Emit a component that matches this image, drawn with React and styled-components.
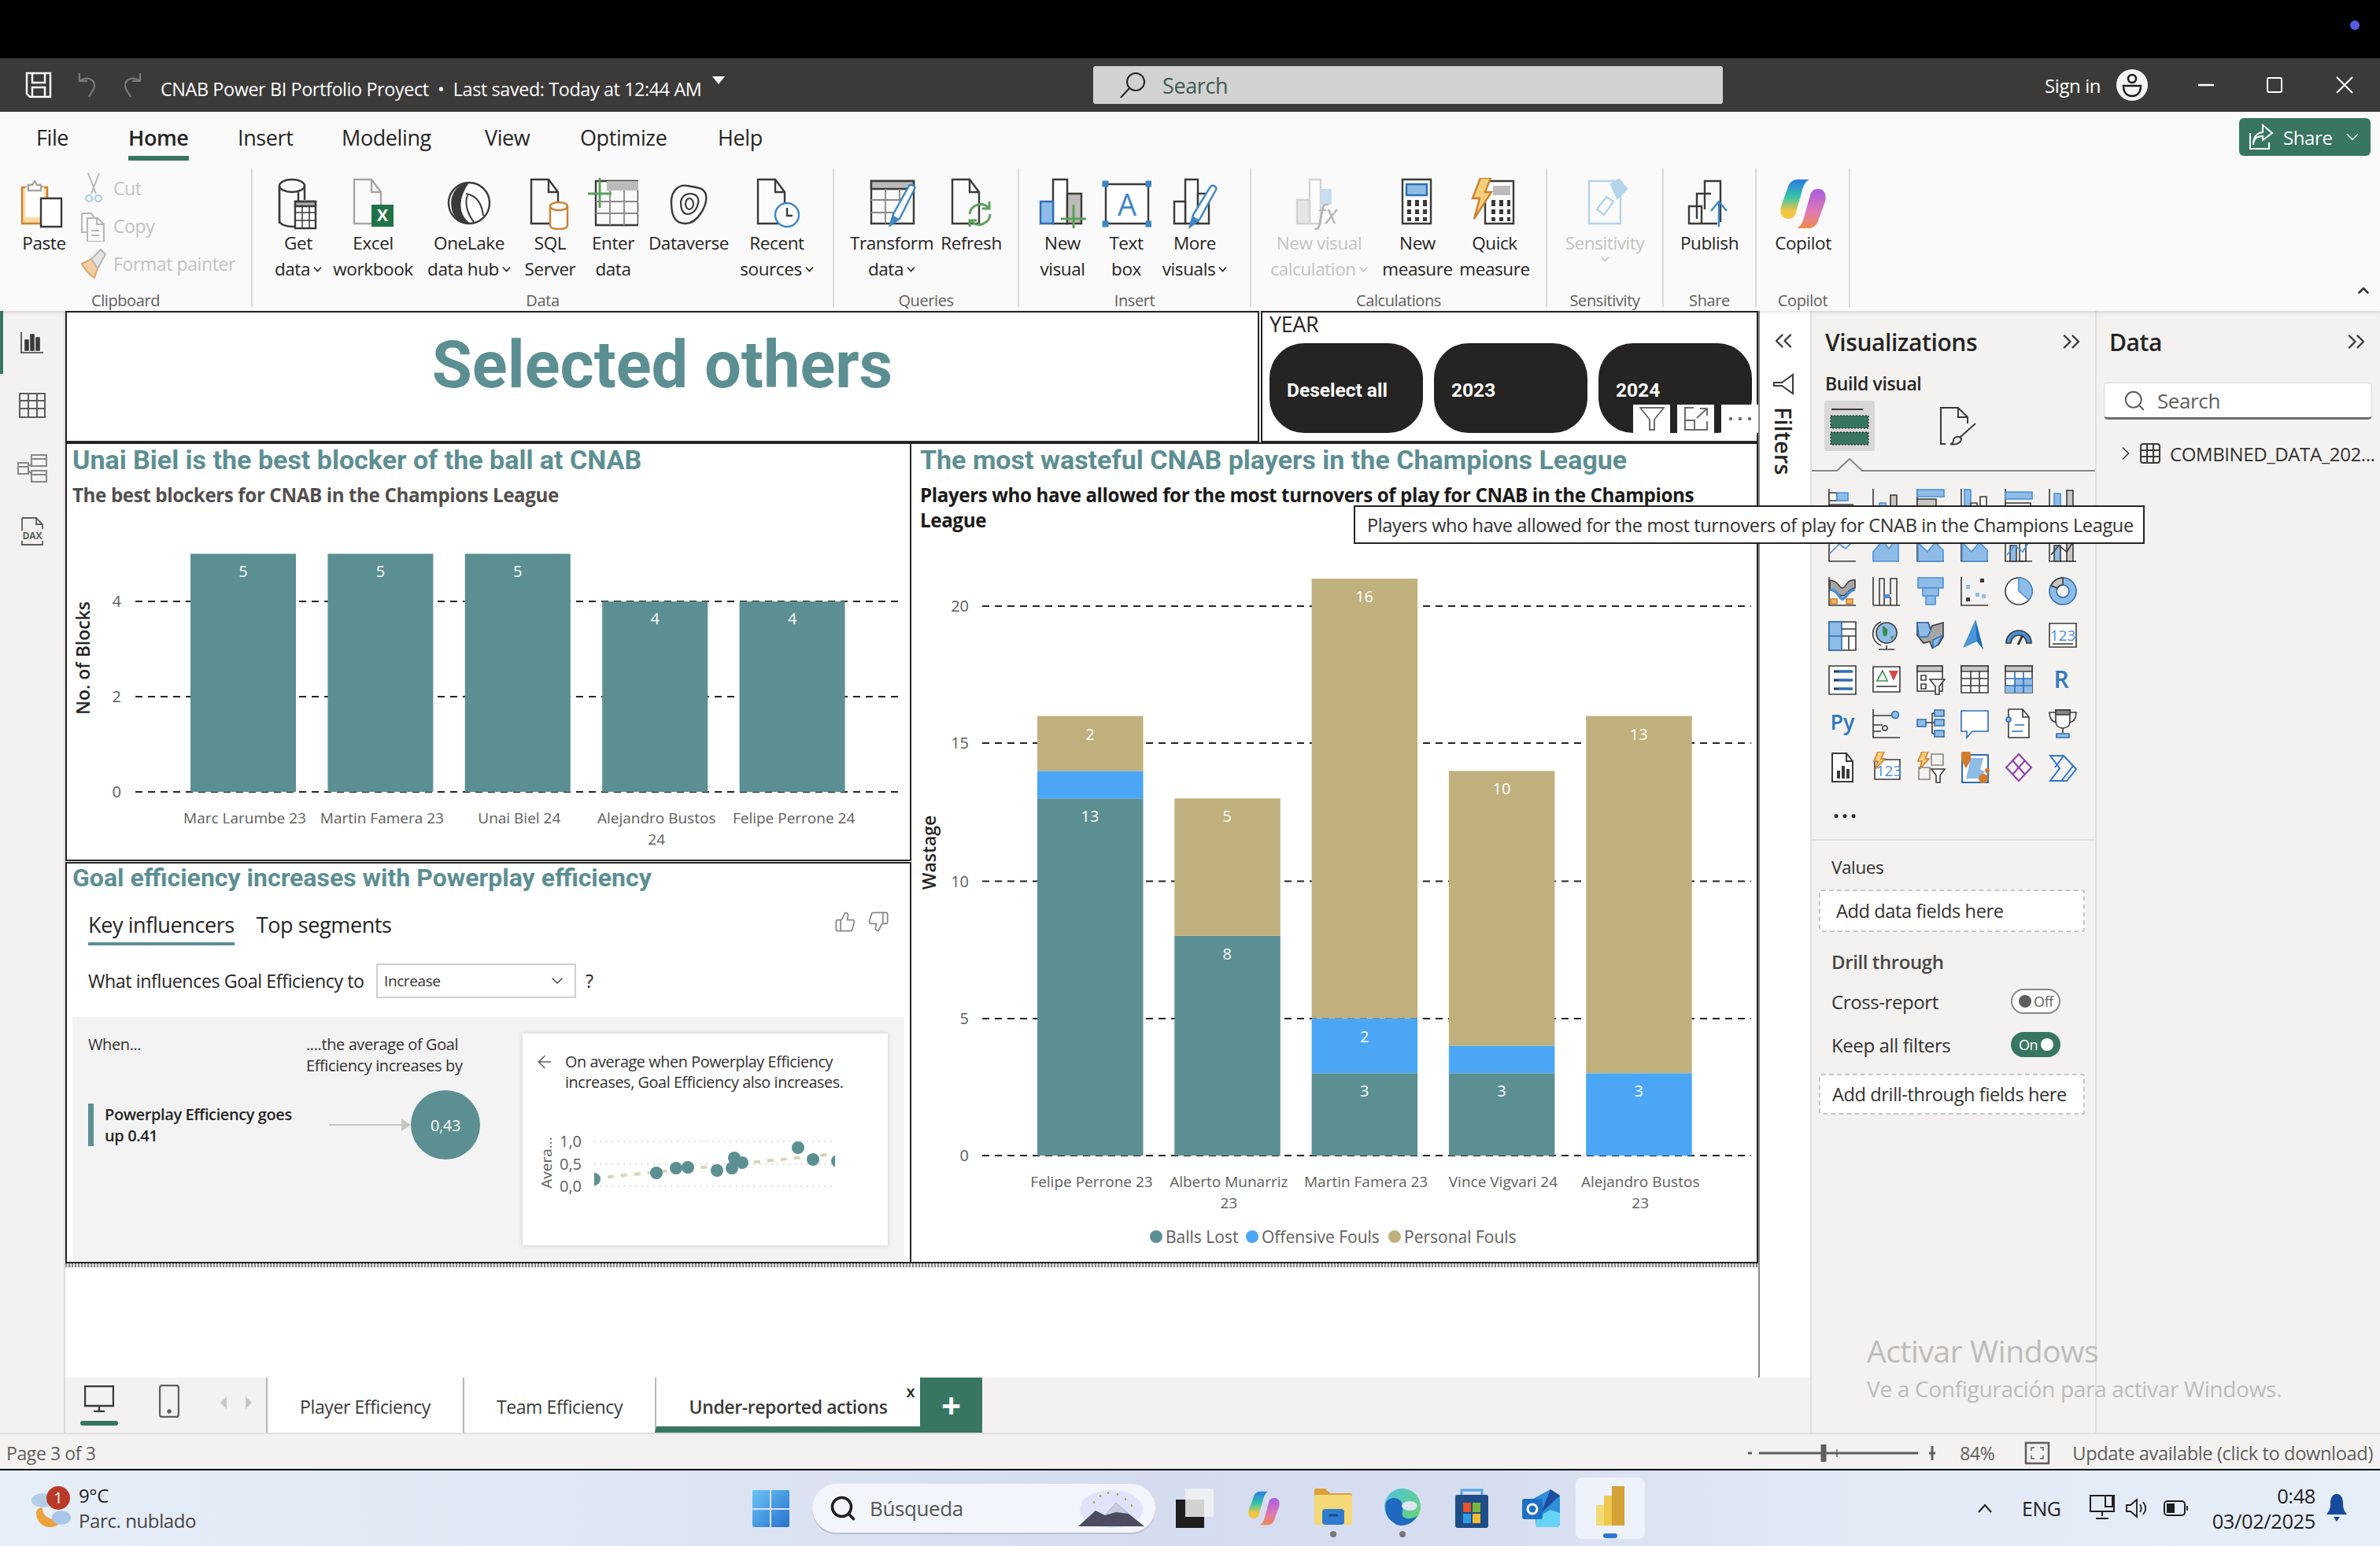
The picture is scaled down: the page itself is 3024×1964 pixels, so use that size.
import React from "react";
import styled, { createGlobalStyle } from "styled-components";
import { ChevronsLeft, ChevronsRight, ChevronDown, ChevronRight, ChevronUp, ThumbsUp, ThumbsDown, ArrowLeft, Search as SearchGlyph } from "lucide-react";

const UI = `"Open Sans", "Noto Sans", sans-serif`;
const DIN = `Roboto, "Liberation Sans", sans-serif`;
const TEAL = "#5c8f92";
const GREEN = "#387662";
const TAN = "#bfb07e";
const SKY = "#4ba6f5";
const INK = "#3b3a39";
const BLUE = "#4a8fd8";
const LBLUE = "#8fbce6";
const GREY = "#a8a6a4";

const GlobalStyle = createGlobalStyle`
    html, body {
        margin: 0;
        padding: 0;
        background: #fff;
    }
    body {
        font-family: ${UI};
        letter-spacing: -0.025em;
        color: #252423;
    }
    * { box-sizing: border-box; }
`;

const Page = styled.div`
    position: relative;
    width: 3024px;
    height: 1964px;
    overflow: hidden;
    display: flex;
    flex-direction: column;
`;

/* --- window chrome --- */
const TopBlack = styled.div`
    height: 74px;
    background: #000;
    display: flex;
    justify-content: flex-end;
    padding: 26px 26px 0 0;
`;
const Dot = styled.div`
    width: 12px;
    height: 12px;
    border-radius: 50%;
    background: #5b5be0;
`;
const TitleBar = styled.div`
    height: 68px;
    background: ${INK};
    display: grid;
    grid-template-columns: 1389px 800px 1fr;
    align-items: center;
    color: #fff;
`;
const TitleLeft = styled.div`
    display: flex;
    align-items: center;
    padding-left: 32px;
`;
const QuickIcon = styled.svg`
    display: block;
    margin-right: ${(p) => p.$mr}px;
`;
const DocTitle = styled.span`
    font-size: 23.4px;
    padding-top: 9px;
    white-space: nowrap;
`;
const TitleCaret = styled.svg`
    margin: 0 0 10px 14px;
`;
const SearchBar = styled.div`
    height: 48px;
    background: #d2d2d0;
    border-radius: 3px;
    display: flex;
    align-items: center;
    padding-left: 32px;
    gap: 20px;
    font-size: 27px;
    color: #3d5a54;
`;
const TitleRight = styled.div`
    display: flex;
    align-items: center;
    padding-left: 409px;
    font-size: 24px;
`;
const Avatar = styled.svg`
    margin: 0 64px 0 20px;
    display: block;
`;
const WinBtn = styled.svg`
    display: block;
    margin-right: ${(p) => p.$mr || 0}px;
`;

/* --- ribbon --- */
const Ribbon = styled.div`
    height: 253px;
    background: #fafafa;
    display: flex;
    flex-direction: column;
    box-shadow: 0 2px 4px rgba(0, 0, 0, 0.12);
    position: relative;
    z-index: 2;
`;
const TabRow = styled.div`
    height: 72px;
    display: flex;
    padding-left: 46px;
`;
const RibbonTab = styled.div`
    width: ${(p) => p.$w}px;
    padding-top: 13px;
    font-size: 27px;
    line-height: 40px;
    color: #252423;
`;
const RibbonTabLabel = styled.span`
    display: inline-block;
    height: 49px;
    font-weight: ${(p) => (p.$active ? 600 : 400)};
    border-bottom: ${(p) => (p.$active ? `6px solid ${GREEN}` : "none")};
`;
const ShareBtn = styled.div`
    margin: 8px 12px 0 auto;
    width: 167px;
    height: 48px;
    background: ${GREEN};
    border-radius: 6px;
    color: #fff;
    font-size: 24px;
    display: flex;
    align-items: center;
    padding-left: 12px;
    gap: 12px;
`;
const CommandRow = styled.div`
    flex: 1;
    display: flex;
    position: relative;
`;
const Group = styled.div`
    width: ${(p) => p.$w}px;
    height: 176px;
    border-right: 2px solid #dcdad8;
    display: flex;
    flex-direction: column;
`;
const GroupBody = styled.div`
    height: 156px;
    flex: none;
    display: flex;
    padding-left: ${(p) => p.$pl || 0}px;
`;
const GroupLabel = styled.div`
    height: 24px;
    line-height: 24px;
    flex: none;
    font-size: 20px;
    text-align: center;
    color: #605e5c;
`;
const Cmd = styled.div`
    width: ${(p) => p.$w}px;
    padding-top: 12px;
    display: flex;
    flex-direction: column;
    align-items: center;
    color: ${(p) => (p.$off ? "#c4c2c0" : "#252423")};
`;
const CmdIcon = styled.svg`
    display: block;
    flex: none;
`;
const CmdLine = styled.div`
    font-size: 22.5px;
    line-height: 33px;
    white-space: nowrap;
    display: flex;
    align-items: center;
    gap: 4px;
`;
const SmallCol = styled.div`
    padding-top: 1px;
`;
const SmallRow = styled.div`
    height: 48px;
    display: flex;
    align-items: center;
    font-size: 23px;
    color: #c4c2c0;
    gap: 8px;
    white-space: nowrap;
`;
const Collapse = styled.div`
    position: absolute;
    right: 10px;
    bottom: 10px;
    color: ${INK};
`;

/* --- main area --- */
const Main = styled.div`
    height: 1427px;
    flex: none;
    display: flex;
    border-bottom: 2px solid #e1dfdd;
`;
const Rail = styled.div`
    width: 81px;
    background: #f3f2f1;
    flex: none;
`;
const RailBtn = styled.div`
    height: 80px;
    display: flex;
    align-items: center;
    justify-content: center;
    border-left: 4px solid ${(p) => (p.$active ? GREEN : "transparent")};
    padding-right: 4px;
`;
const Middle = styled.div`
    width: 2219px;
    display: flex;
    flex-direction: column;
`;
const CanvasRow = styled.div`
    height: 1355px;
    flex: none;
    display: flex;
`;
const Canvas = styled.div`
    width: 2155px;
    background: #fff;
    border-right: 2px solid #8a8886;
    border-left: 2px solid #e1dfdd;
`;
const VisualRow = styled.div`
    display: flex;
    height: ${(p) => p.$h}px;
`;
const BannerCard = styled.div`
    width: 1517px;
    border: 2px solid #252423;
    display: flex;
    align-items: center;
    justify-content: center;
    padding-bottom: 30px;
`;
const BannerTitle = styled.div`
    font-family: ${DIN};
    font-weight: 700;
    font-size: 83px;
    color: ${TEAL};
    letter-spacing: 0;
`;
const SlicerCard = styled.div`
    position: relative;
    margin-left: 2px;
    flex: 1;
    border: 2px solid #252423;
    padding-left: 9px;
`;
const SlicerTitle = styled.div`
    font-size: 27px;
    line-height: 30px;
`;
const SlicerRow = styled.div`
    margin-top: 9px;
    display: flex;
    gap: 14px;
`;
const SlicerBtn = styled.div`
    width: 195px;
    height: 114px;
    border-radius: 44px;
    background: #252423;
    color: #fff;
    font-family: ${DIN};
    font-weight: 700;
    font-size: 24.5px;
    letter-spacing: 0;
    display: flex;
    align-items: center;
    padding: 4px 0 0 22px;
`;
const HoverTools = styled.div`
    position: absolute;
    right: -2px;
    bottom: 10px;
    display: flex;
    gap: 9px;
`;
const HoverTool = styled.div`
    width: 47px;
    height: 36px;
    background: #fff;
    display: flex;
    align-items: center;
    justify-content: center;
    color: #6e6c6a;
`;
const LeftColumn = styled.div`
    width: 1075px;
    flex: none;
    display: flex;
    flex-direction: column;
    gap: 1px;
`;
const Card = styled.div`
    height: ${(p) => p.$h}px;
    border: 2px solid #252423;
    border-left-width: ${(p) => (p.$noLeft ? 0 : 2)}px;
    display: flex;
    flex-direction: column;
    flex: ${(p) => (p.$grow ? 1 : "none")};
    min-width: 0;
`;
const CardTitle = styled.div`
    font-family: ${DIN};
    font-weight: 700;
    font-size: ${(p) => p.$size || 34}px;
    line-height: ${(p) => p.$lh || 40}px;
    color: ${TEAL};
    padding-left: ${(p) => p.$pl}px;
    letter-spacing: 0;
    white-space: nowrap;
`;
const CardSub = styled.div`
    margin: ${(p) => p.$mt}px 0 ${(p) => p.$mb || 0}px;
    padding: 0 60px 0 ${(p) => p.$pl}px;
    font-size: 24.2px;
    line-height: 32px;
    font-weight: 700;
    color: ${(p) => p.$color};
`;
const ChartSvg = styled.svg`
    display: block;
    overflow: visible;
    flex: none;
`;
const MiniChart = styled(ChartSvg)`
    margin-top: 12px;
`;
const Tick = styled.text`
    font-family: ${UI};
    font-size: ${(p) => p.$size || 19}px;
    fill: #605e5c;
    letter-spacing: 0;
`;
const AxisName = styled.text`
    font-family: ${UI};
    font-size: 23px;
    font-weight: 600;
    fill: #252423;
    letter-spacing: 0;
`;
const BarValue = styled.text`
    font-family: ${UI};
    font-size: 20px;
    fill: #fff;
    letter-spacing: 0;
`;
const LegendText = styled.text`
    font-family: ${UI};
    font-size: 21px;
    fill: #605e5c;
    letter-spacing: 0;
`;
const DottedBand = styled.div`
    height: 5px;
    background: repeating-linear-gradient(90deg, #8a8886 0 2px, #e8e8e8 2px 4px);
`;

/* key influencers */
const KiTabs = styled.div`
    margin-top: 24px;
    padding: 0 26px 0 27px;
    display: flex;
    gap: 28px;
`;
const KiTab = styled.div`
    font-size: 27px;
    line-height: 36px;
    height: 44px;
    border-bottom: ${(p) => (p.$active ? `4px solid ${TEAL}` : "none")};
`;
const Thumbs = styled.div`
    margin-left: auto;
    display: flex;
    gap: 14px;
    color: #8a8886;
`;
const PromptRow = styled.div`
    margin-top: 23px;
    padding-left: 27px;
    height: 44px;
    display: flex;
    align-items: center;
    font-size: 23.2px;
`;
const PromptText = styled.div`
    width: 366px;
    white-space: nowrap;
`;
const Select = styled.div`
    width: 254px;
    height: 44px;
    border: 2px solid #d2d0ce;
    display: flex;
    align-items: center;
    justify-content: space-between;
    padding: 0 10px 0 8px;
    font-size: 19px;
    color: #323130;
    margin-right: 12px;
`;
const InsightPanel = styled.div`
    margin: 24px 7px 0;
    flex: 1;
    background: #f3f3f3;
    display: flex;
    padding: 21px 0 0 20px;
`;
const InsightLeft = styled.div`
    width: 552px;
    flex: none;
`;
const InsightHead = styled.div`
    display: flex;
    font-size: 20px;
    line-height: 27px;
    color: #323130;
`;
const WhenCell = styled.div`
    width: 277px;
`;
const InfluenceRow = styled.div`
    margin-top: 18px;
    height: 88px;
    display: flex;
    align-items: center;
`;
const InfluenceLabel = styled.div`
    width: 306px;
    height: 54px;
    border-left: 7px solid ${TEAL};
    padding-left: 14px;
    font-size: 20px;
    line-height: 27px;
    font-weight: 600;
    color: #252423;
    white-space: nowrap;
`;
const InfluenceArrow = styled.svg`
    flex: none;
`;
const InfluenceBubble = styled.div`
    width: 88px;
    height: 88px;
    flex: none;
    border-radius: 50%;
    background: ${TEAL};
    color: #fff;
    font-size: 20px;
    display: flex;
    align-items: center;
    justify-content: center;
`;
const DetailCard = styled.div`
    width: 464px;
    height: 269px;
    background: #fff;
    box-shadow: 0 0 6px rgba(0, 0, 0, 0.18);
    padding-top: 23px;
`;
const DetailHead = styled.div`
    display: flex;
    padding-left: 15px;
    font-size: 19.8px;
    line-height: 26px;
    color: #323130;
    white-space: nowrap;
`;
const DetailBack = styled.div`
    width: 39px;
    flex: none;
    color: #605e5c;
`;

/* filters + panes */
const FiltersPane = styled.div`
    width: 64px;
    background: #fff;
    display: flex;
    flex-direction: column;
    align-items: center;
    padding: 20px 4px 0 0;
    color: ${INK};
`;
const FilterFunnel = styled.svg`
    margin-top: 23px;
`;
const FiltersLabel = styled.div`
    writing-mode: vertical-rl;
    font-size: 29px;
    font-weight: 600;
    margin-top: 15px;
    color: #252423;
    letter-spacing: 0;
`;
const TabBar = styled.div`
    height: 70px;
    flex: none;
    background: #f3f2f1;
    display: flex;
    border-left: 2px solid #dcdad8;
`;
const DeviceBtn = styled.div`
    width: ${(p) => p.$w}px;
    display: flex;
    flex-direction: column;
    align-items: center;
    padding-top: ${(p) => p.$pt}px;
`;
const DevicePill = styled.div`
    width: 48px;
    height: 6px;
    border-radius: 3px;
    background: ${GREEN};
    margin-top: 11px;
`;
const PageArrows = styled.div`
    width: 77px;
    display: flex;
    justify-content: center;
    align-items: center;
    gap: 24px;
    padding-bottom: 6px;
`;
const PageTab = styled.div`
    position: relative;
    width: ${(p) => p.$w}px;
    background: #fff;
    border-left: 2px solid #b9b7b5;
    border-bottom: ${(p) => (p.$active ? `8px solid ${GREEN}` : "none")};
    padding-top: ${(p) => (p.$active ? 12 : 4)}px;
    display: flex;
    align-items: center;
    justify-content: center;
    font-size: 23px;
    font-weight: ${(p) => (p.$active ? 600 : 400)};
    color: #3b3a39;
    white-space: nowrap;
`;
const TabClose = styled.span`
    position: absolute;
    right: 7px;
    top: 4px;
    font-size: 20px;
    color: #252423;
`;
const AddPage = styled.div`
    width: 79px;
    background: ${GREEN};
    display: flex;
    align-items: center;
    justify-content: center;
    color: #fff;
    font-size: 44px;
    font-weight: 700;
    line-height: 1;
`;
const Pane = styled.div`
    width: ${(p) => p.$w}px;
    background: #f3f2f1;
    border-left: 2px solid #e1dfdd;
    flex: none;
`;
const PaneHead = styled.div`
    height: 78px;
    display: flex;
    align-items: center;
    justify-content: space-between;
    padding: 0 ${(p) => p.$pr}px 0 ${(p) => p.$pl}px;
    font-size: 30px;
    font-weight: 600;
    color: #252423;
`;
const BuildLabel = styled.div`
    padding-left: 17px;
    font-size: 23px;
    font-weight: 600;
    line-height: 30px;
    margin-top: -1px;
`;
const BuildTabs = styled.div`
    margin-top: 7px;
    padding-left: 16px;
    display: flex;
    align-items: center;
`;
const BuildTab = styled.div`
    width: 64px;
    height: 64px;
    border-radius: 3px;
    background: ${(p) => (p.$active ? "#d9d7d6" : "transparent")};
    margin-right: ${(p) => p.$mr || 0}px;
    display: flex;
    align-items: center;
    justify-content: center;
`;
const Notch = styled.svg`
    display: block;
    margin-top: 9px;
`;
const VizGrid = styled.div`
    margin-top: 11px;
    padding-left: 11px;
    display: grid;
    grid-template-columns: repeat(6, 56px);
    grid-auto-rows: 56px;
`;
const VizCell = styled.div`
    display: flex;
    align-items: center;
    justify-content: center;
`;
const VizMore = styled.div`
    height: 50px;
    padding-left: 27px;
    font-size: 28px;
    font-weight: 700;
    letter-spacing: 3px;
    line-height: 50px;
`;
const PaneSection = styled.div`
    margin-top: 13px;
    border-top: 2px solid #e1dfdd;
    padding-top: 19px;
`;
const FieldLabel = styled.div`
    margin-top: ${(p) => p.$mt || 0}px;
    padding-left: 25px;
    font-size: ${(p) => (p.$bold ? 24 : 22.5)}px;
    line-height: 30px;
    font-weight: ${(p) => (p.$bold ? 600 : 400)};
    color: ${(p) => (p.$bold ? "#484644" : "#323130")};
`;
const DropBox = styled.div`
    margin: ${(p) => p.$mt}px 13px 0 9px;
    height: ${(p) => p.$h}px;
    background: #fff;
    border: 2px dashed #c8c6c4;
    border-radius: 3px;
    display: flex;
    align-items: center;
    padding-left: ${(p) => p.$pl}px;
    font-size: 23.6px;
    color: #323130;
    white-space: nowrap;
`;
const ToggleRow = styled.div`
    margin-top: ${(p) => p.$mt}px;
    width: 316px;
    height: 32px;
    padding-left: 25px;
    display: flex;
    align-items: center;
    justify-content: space-between;
    font-size: 24px;
    color: #323130;
`;
const Toggle = styled.div`
    width: 63px;
    height: 32px;
    border-radius: 16px;
    border: 2px solid ${(p) => (p.$on ? GREEN : "#8a8886")};
    background: ${(p) => (p.$on ? GREEN : "#fff")};
    display: flex;
    flex-direction: ${(p) => (p.$on ? "row" : "row-reverse")};
    align-items: center;
    justify-content: space-between;
    padding: 0 7px 0 8px;
    font-size: 18px;
    color: ${(p) => (p.$on ? "#fff" : "#605e5c")};
`;
const ToggleKnob = styled.span`
    width: 16px;
    height: 16px;
    border-radius: 50%;
    background: ${(p) => (p.$on ? "#fff" : "#605e5c")};
`;
const DataSearch = styled.div`
    margin: 13px 10px 0 9px;
    height: 47px;
    background: #fff;
    border-radius: 5px;
    border: 1px solid #d8d6d4;
    border-bottom: 3px solid #6e6c6a;
    display: flex;
    align-items: center;
    padding-left: 23px;
    gap: 14px;
    font-size: 26px;
    color: #605e5c;
`;
const TreeRow = styled.div`
    margin-top: 23px;
    height: 40px;
    padding-left: 23px;
    display: flex;
    align-items: center;
    font-size: 24px;
    color: #323130;
    white-space: nowrap;
`;
const TreeTable = styled.svg`
    margin: 0 12px 0 4px;
`;

/* status + taskbar */
const StatusBar = styled.div`
    height: 44px;
    flex: none;
    background: #f3f2f1;
    display: flex;
    align-items: center;
    padding: 3px 9px 0 8px;
    font-size: 23px;
    color: #605e5c;
`;
const StatusRight = styled.div`
    margin-left: auto;
    display: flex;
    align-items: center;
`;
const StatusPct = styled.span`
    margin-left: 25px;
`;
const StatusFit = styled.svg`
    display: block;
    margin: 0 28px 0 38px;
`;
const UpdateText = styled.span`
    font-size: 23.7px;
`;
const Taskbar = styled.div`
    flex: 1;
    border-top: 2px solid #000;
    background: linear-gradient(90deg, #e6eef8 0%, #dfe7f4 25%, #d5dcf0 48%, #d6ddf0 62%, #e2eaf6 78%, #e6eef8 100%);
    display: flex;
    align-items: center;
`;
const Weather = styled.div`
    width: 956px;
    padding-left: 38px;
    display: flex;
    align-items: center;
`;
const WeatherText = styled.div`
    font-size: 24px;
    line-height: 32px;
    color: #252423;
`;
const WeatherSub = styled.div`
    color: #444;
`;
const TaskSearch = styled.div`
    margin-left: 29px;
    width: 436px;
    height: 62px;
    border-radius: 31px;
    background: #f2f5fb;
    box-shadow: 0 2px 1px #b8bdd2;
    display: flex;
    align-items: center;
    padding-left: 21px;
    gap: 16px;
    font-size: 26px;
    color: #555;
`;
const TaskSearchArt = styled.svg`
    display: block;
    margin-left: auto;
    margin-right: 12px;
`;
const TaskApps = styled.div`
    margin-left: 6px;
    display: flex;
`;
const TaskApp = styled.div`
    position: relative;
    width: 88px;
    height: 78px;
    display: flex;
    align-items: center;
    justify-content: center;
    border-radius: 8px;
    background: ${(p) => (p.$active ? "#eef2fb" : "transparent")};
`;
const TaskAppIcon = styled.svg`
    display: block;
    margin-top: ${(p) => p.$mt || 0}px;
`;
const TaskDot = styled.span`
    position: absolute;
    bottom: ${(p) => (p.$active ? 1 : 2)}px;
    left: 50%;
    transform: translateX(-50%);
    width: ${(p) => (p.$active ? 18 : 8)}px;
    height: ${(p) => (p.$active ? 6 : 8)}px;
    border-radius: 4px;
    background: ${(p) => (p.$active ? "#2f76cf" : "#777")};
`;
const Tray = styled.div`
    margin-left: auto;
    display: flex;
    align-items: center;
    padding-right: 42px;
    font-size: 25px;
    color: #1f1f1f;
`;
const TrayItem = styled.div`
    margin-right: ${(p) => p.$mr}px;
    display: flex;
    align-items: center;
`;
const Clock = styled.div`
    text-align: right;
    font-size: 25.5px;
    line-height: 32px;
    margin-right: 14px;
`;

/* overlays */
const Tooltip = styled.div`
    position: absolute;
    left: 1720px;
    top: 642px;
    width: 1005px;
    height: 49px;
    background: #fff;
    border: 2px solid #252423;
    display: flex;
    align-items: center;
    padding-left: 15px;
    font-size: 23.6px;
    color: #323130;
    white-space: nowrap;
    z-index: 5;
`;
const Watermark = styled.div`
    position: absolute;
    left: 2372px;
    top: 1692px;
    color: #bdbcba;
    font-size: 28.2px;
    line-height: 48px;
    z-index: 5;
    white-space: nowrap;
`;
const WatermarkBig = styled.div`
    font-size: 39px;
`;
const IconText = styled.text`
    font-family: ${UI};
    letter-spacing: 0;
`;

/* --- ribbon icon drawings --- */
const RI = ({ children, off }) => (
    <CmdIcon width="64" height="66" viewBox="0 0 64 66" fill="none" stroke={INK} strokeWidth="2.4" opacity={off ? 0.45 : 1}>
        {children}
    </CmdIcon>
);
const DocShape = () => <path d="M8 2h22l12 16v40H8zM30 2v16h12" fill="#fafafa" />;

const copilotLeft = "M12 14c2-8 7-12 13-12h15c-6 3-8 9-10 17l-7 25c-1 5-5 8-10 8-9 0-11-9-9-16z";
const copilotRight = "M52 52c-2 8-7 12-13 12H24c6-3 8-9 10-17l7-25c1-5 5-8 10-8 9 0 11 9 9 16z";

const ribbonIcons = {
    paste: (
        <RI>
            <path d="M4 12h32v46H4z" fill="#f7dc9e" stroke="#cf7f2e" />
            <path d="M8 12h24v38H8z" fill="#fff" stroke="none" />
            <path d="M12 16V9h5l3-5 3 5h5v7z" fill="#fff" stroke={GREY} />
            <path d="M28 26h26v36H28z" fill="#fff" />
        </RI>
    ),
    getData: (
        <RI>
            <path d="M8 10v44c0 5 8 8 20 8h4V10" fill="#fafafa" />
            <ellipse cx="24" cy="10" rx="16" ry="8" fill="#fafafa" />
            <path d="M8 10v48M40 10v18" />
            <path d="M28 30h26v34H28z" fill="#fff" />
            <path d="M28 30h26v6H28z" fill={GREY} />
            <path d="M28 44h26M28 54h26M37 36v28M46 36v28" strokeWidth="1.5" />
        </RI>
    ),
    excel: (
        <RI>
            <path d="M8 2h22l12 16v40H8zM30 2v16h12" fill="#fafafa" stroke={GREY} />
            <rect x="30" y="34" width="28" height="28" fill="#217346" stroke="none" />
            <IconText x="44" y="55" textAnchor="middle" fontSize="21" fontWeight="700" fill="#fff" stroke="none">X</IconText>
        </RI>
    ),
    oneLake: (
        <RI>
            <circle cx="32" cy="32" r="26" fill="#fff" stroke={INK} />
            <path d="M32 6C16 8 6 22 10 40c3 14 16 20 24 18-12-8-20-26-2-52z" fill={INK} stroke="none" />
            <path d="M28 20c12 2 20 10 22 28M30 22c-4 10 0 24 8 34" strokeWidth="2" />
        </RI>
    ),
    sql: (
        <RI>
            <DocShape />
            <path d="M32 36v24c0 3 4 5 11 5s11-2 11-5V36" fill="#fff" stroke="#cf7f2e" />
            <ellipse cx="43" cy="36" rx="11" ry="5" fill="#fff" stroke="#cf7f2e" />
        </RI>
    ),
    enter: (
        <RI>
            <path d="M10 4h54v56H10z" fill="#fafafa" />
            <path d="M24 4h40v12H24z" fill="#bdbbb9" stroke="none" />
            <path d="M10 30h54M10 45h54M28 16v44M46 16v44" strokeWidth="1.8" stroke="#8a8886" />
            <path d="M15 0v38M0 20h30" stroke="#5aa05a" strokeWidth="3" />
        </RI>
    ),
    dataverse: (
        <RI>
            <path d="M10 30c0-14 10-22 20-20 12 2 22 2 24 12 2 12-10 36-26 36S10 44 10 30z" strokeWidth="2.4" />
            <path d="M22 32c0-8 6-12 12-12s12 4 10 12c-2 10-8 14-14 14s-8-8-8-14z" strokeWidth="2.2" />
            <ellipse cx="33" cy="33" rx="5" ry="7" strokeWidth="2" />
        </RI>
    ),
    recent: (
        <RI>
            <DocShape />
            <circle cx="45" cy="47" r="15" fill="#fff" stroke="#3d86c8" />
            <path d="M45 38v10h7" stroke={INK} />
        </RI>
    ),
    transform: (
        <RI>
            <path d="M6 4h54v54H6z" fill="#fafafa" />
            <path d="M6 4h54v10H6z" fill="#bdbbb9" />
            <path d="M6 28h42M6 44h30M24 14v44M42 14v14" stroke="#8a8886" strokeWidth="1.8" />
            <path d="M30 60l4-14 20-36c2-3 9 0 7 4L42 52z" fill="#fff" stroke="#3d86c8" />
            <path d="M30 62l3-15 8 5z" fill="#3d86c8" stroke="none" />
        </RI>
    ),
    refresh: (
        <RI>
            <DocShape />
            <path d="M30 46a14 14 0 0 1 24-8M56 46a14 14 0 0 1-24 9" stroke="#5aa05a" strokeWidth="3" />
            <path d="M55 30v9h-9M30 62v-8h9" stroke="#5aa05a" strokeWidth="3" />
        </RI>
    ),
    newVisual: (
        <RI>
            <path d="M20 2h18v56H20z" fill="#fff" />
            <path d="M38 20h18v38H38z" fill="#bdbbb9" />
            <path d="M4 30h16v28H4z" fill={LBLUE} stroke="#2f6db5" />
            <path d="M46 34v30M30 52h32" stroke="#5aa05a" strokeWidth="3" />
        </RI>
    ),
    textBox: (
        <RI>
            <path d="M6 8h54v50H6z" fill="#fff" />
            <path d="M2 4h7v7H2zM57 4h7v7h-7zM2 55h7v7H2zM57 55h7v7h-7z" fill="#3d86c8" stroke="#3d86c8" strokeWidth="1" />
            <IconText x="33" y="48" textAnchor="middle" fontSize="38" fill="#3d86c8" stroke="none">A</IconText>
        </RI>
    ),
    moreVisuals: (
        <RI>
            <path d="M20 2h16v56H20z" fill="#fff" />
            <path d="M36 20h14v38H36zM6 30h14v28H6z" fill="#fafafa" />
            <path d="M26 62l4-15 22-36c2-3 9 0 7 4L38 53z" fill="#fff" stroke="#3d86c8" />
            <path d="M26 63l3-15 8 5z" fill="#3d86c8" stroke="none" />
        </RI>
    ),
    calc: (
        <RI off>
            <path d="M20 2h14v56H20z" stroke={GREY} fill="#fff" />
            <path d="M34 14h14v20H34z" fill={LBLUE} stroke="none" />
            <path d="M4 28h16v30H4z" fill="#d2d0ce" stroke={GREY} />
            <IconText x="30" y="58" fontSize="32" fontStyle="italic" fill="#605e5c" stroke="none">fx</IconText>
        </RI>
    ),
    measure: (
        <RI>
            <path d="M13 2h36v56H13z" fill="#fff" />
            <path d="M18 8h26v14H18z" fill={LBLUE} stroke="#2f6db5" />
            <path d="M19 28h5v8h-5zM29 28h5v8h-5zM39 28h5v8h-5zM19 40h5v6h-5zM29 40h5v6h-5zM39 40h5v6h-5zM19 50h5v5h-5zM29 50h5v5h-5zM39 50h5v5h-5z" fill={INK} stroke="none" />
        </RI>
    ),
    quick: (
        <RI>
            <path d="M20 4h36v54H20z" fill="#fff" />
            <path d="M30 10h22v12H30z" fill="#bdbbb9" stroke="none" />
            <path d="M28 28h5v8h-5zM38 28h5v8h-5zM48 28h4v8h-4zM28 40h5v6h-5zM38 40h5v6h-5zM48 40h4v6h-4zM28 50h5v5h-5zM38 50h5v5h-5zM48 50h4v5h-4z" fill={INK} stroke="none" />
            <path d="M14 0h13l-7 18h8L6 52l7-26H4z" fill="#f7cf7a" stroke="#cf7f2e" />
        </RI>
    ),
    sensitivity: (
        <RI>
            <path d="M12 4h40v54H12z" stroke="#b4d4ec" fill="#fafafa" />
            <path d="M22 40l12-16 9 6-12 17z" stroke="#b4d4ec" />
            <path d="M40 8l10-6 10 12-12 12z" fill="#b4d4ec" stroke="#b4d4ec" />
        </RI>
    ),
    publish: (
        <RI>
            <path d="M26 40V4h20v52" />
            <path d="M16 52V20h18" />
            <path d="M6 58V36h16v22zM6 58h36" />
            <path d="M44 62V32M34 42l10-12 10 12" stroke="#3d86c8" />
        </RI>
    ),
    copilot: (
        <CmdIcon width="64" height="66" viewBox="0 0 64 66">
            <defs>
                <linearGradient id="cpA" x1="0" y1="0" x2="0" y2="1">
                    <stop offset="0" stopColor="#2b78e4" />
                    <stop offset="0.45" stopColor="#36c6a8" />
                    <stop offset="0.8" stopColor="#f4c542" />
                </linearGradient>
                <linearGradient id="cpB" x1="0" y1="0" x2="0" y2="1">
                    <stop offset="0" stopColor="#a85be0" />
                    <stop offset="0.6" stopColor="#e07ab0" />
                    <stop offset="1" stopColor="#f08a4a" />
                </linearGradient>
            </defs>
            <path d={copilotLeft} fill="url(#cpA)" />
            <path d={copilotRight} fill="url(#cpB)" />
        </CmdIcon>
    ),
};

const SmallCut = () => (
    <CmdIcon width="34" height="40" viewBox="0 0 34 40" fill="none" stroke="#b8b6b4" strokeWidth="2">
        <path d="M10 1l10 26M24 1L14 27" />
        <circle cx="11" cy="33" r="4" stroke="#a9cbe6" />
        <circle cx="23" cy="33" r="4" stroke="#a9cbe6" />
    </CmdIcon>
);
const SmallCopy = () => (
    <CmdIcon width="34" height="40" viewBox="0 0 34 40" fill="none" stroke="#b8b6b4" strokeWidth="2">
        <path d="M2 4h12l4 6M2 4v24h6" />
        <path d="M9 10h13l8 8v22H9zM21 10v8h9M14 26h10M14 32h10" fill="#fafafa" />
    </CmdIcon>
);
const SmallPainter = () => (
    <CmdIcon width="34" height="40" viewBox="0 0 34 40" fill="none" strokeWidth="2">
        <path d="M2 20l12-6 8 12-4 12c-6-4-12-10-16-18z" fill="#f4cfa2" stroke="#e0a76a" />
        <path d="M14 14l12-12 6 6-10 18z" fill="#e6e4e2" stroke="#b8b6b4" />
    </CmdIcon>
);

const Chev = () => (
    <svg width="11" height="8" viewBox="0 0 11 8" fill="none" stroke="currentColor" strokeWidth="1.6">
        <path d="M1 1.5l4.5 5 4.5-5" />
    </svg>
);

const Command = ({ w, icon, lines, chev, off }) => (
    <Cmd $w={w} $off={off}>
        {ribbonIcons[icon]}
        {lines.map((line, idx) => (
            <CmdLine key={idx}>
                {line}
                {chev && idx === lines.length - 1 && <Chev />}
            </CmdLine>
        ))}
    </Cmd>
);

/* --- visualizations pane icons --- */
const Vz = ({ children }) => (
    <svg width="38" height="40" viewBox="0 0 38 40" fill="none" stroke={INK} strokeWidth="1.6">
        {children}
    </svg>
);
const Base = () => <path d="M2 2v36h34" stroke={INK} />;
const vizIcons = [
    <Vz key="a1"><Base /><path d="M2 7h10v10H2z" fill="#fff" /><path d="M12 7h14v10H12z" fill={LBLUE} stroke={BLUE} /><path d="M2 22h30v8H2z" /></Vz>,
    <Vz key="a2"><Base /><path d="M10 20h8v18h-8z" fill={LBLUE} stroke={BLUE} /><path d="M24 10h8v28h-8z" fill="#c8c6c4" /></Vz>,
    <Vz key="a3"><Base /><path d="M2 3h34v9H2z" fill={LBLUE} stroke={BLUE} /><path d="M2 15h24v9H2z" fill="#c8c6c4" /><path d="M2 27h14v9H2z" /></Vz>,
    <Vz key="a4"><Base /><path d="M6 3h8v35H6z" fill={LBLUE} stroke={BLUE} /><path d="M14 20h8v18h-8zM26 12h8v26h-8z" fill="#fff" /></Vz>,
    <Vz key="a5"><Base /><path d="M2 6h34v9H2z" fill={LBLUE} stroke={BLUE} /><path d="M2 20h32v9H2z" /></Vz>,
    <Vz key="a6"><Base /><path d="M8 8h8v30H8z" fill={LBLUE} stroke={BLUE} /><path d="M24 4h8v34h-8z" fill="#c8c6c4" /></Vz>,
    <Vz key="b1"><Base /><path d="M3 28l12-12 8 6 12-12" stroke={BLUE} /></Vz>,
    <Vz key="b2"><path d="M2 38V26l12-14 8 10 12-16v32z" fill={LBLUE} stroke={BLUE} /></Vz>,
    <Vz key="b3"><Base /><path d="M3 14l12 12 10-12 10 10v14H3z" fill={LBLUE} stroke={BLUE} /></Vz>,
    <Vz key="b4"><Base /><path d="M3 14l12 12 10-12 10 10v14H3z" fill={LBLUE} stroke={BLUE} /></Vz>,
    <Vz key="b5"><Base /><path d="M8 18h8v20H8z" fill={LBLUE} /><path d="M20 8h8v30h-8z" /><path d="M4 30l10-12 10 8 10-16" stroke={BLUE} /></Vz>,
    <Vz key="b6"><Base /><path d="M8 18h8v20H8z" fill={LBLUE} /><path d="M24 8h8v30h-8z" fill="#c8c6c4" /><path d="M4 30l10-12 10 8 10-16" /></Vz>,
    <Vz key="c1"><Base /><path d="M3 6c10 0 12 10 16 10s6-12 16-10v10c-8 0-10 10-16 10S12 18 3 18z" fill="#a8a6a4" /><path d="M3 18c10 0 12 12 16 12s8-12 16-12" stroke={BLUE} strokeWidth="3.5" /><path d="M4 30h8v6H4zM24 30h8v6h-8z" fill="#f2b25e" stroke="#cf7f2e" /></Vz>,
    <Vz key="c2"><path d="M2 38V2M10 38V4h6v34M16 28h8v10M24 24V4h8v34M2 38h34" /><path d="M16 24h7v5h-7z" fill={BLUE} stroke="none" /></Vz>,
    <Vz key="c3"><path d="M3 3h32v13H3z" fill={LBLUE} stroke={BLUE} /><path d="M9 16h20v10H9zM13 26h12v11H13z" fill={LBLUE} stroke={BLUE} /></Vz>,
    <Vz key="c4"><Base /><path d="M8 12h5v5H8zM20 22h5v5h-5zM28 24h5v5h-5z" fill={LBLUE} stroke="none" /><path d="M26 4h5v5h-5zM8 28h5v5H8z" fill={INK} stroke="none" /></Vz>,
    <Vz key="c5"><circle cx="19" cy="20" r="17" fill="#fff" /><path d="M19 3a17 17 0 0 1 13 28L19 20z" fill={LBLUE} stroke={BLUE} /></Vz>,
    <Vz key="c6"><circle cx="19" cy="20" r="17" fill={LBLUE} stroke="#2f6db5" /><circle cx="19" cy="20" r="8" fill="#f3f2f1" stroke="#2f6db5" /><path d="M19 3a17 17 0 0 0-15 10l8 3a8 8 0 0 1 7-4z" fill="#c8c6c4" stroke={INK} /></Vz>,
    <Vz key="d1"><path d="M2 3h34v36H2z" fill="#fff" /><path d="M2 3h16v18H2zM2 21h16v18H2z" fill={LBLUE} stroke="#2f6db5" /><path d="M18 12h18M27 21v18M18 21h18" /></Vz>,
    <Vz key="d2"><circle cx="19" cy="17" r="13" fill={LBLUE} /><path d="M14 8c4 2 8 4 6 10s-6 4-6-2zM24 22l4-2-2 6z" fill="#3d8f4f" stroke="none" /><path d="M12 3a16 16 0 0 0 0 30M19 33v4M9 38h20" /></Vz>,
    <Vz key="d3"><path d="M2 4h14l3 8 2-4 14-4v18l-6 10-8 4-3-8-8 2-8-10z" fill="#a8a6a4" /><path d="M2 4h14l3 10-4 8H4z" fill={LBLUE} stroke="#2f6db5" /><path d="M34 20l-6 12-6 4v-10z" fill={LBLUE} stroke="#2f6db5" /></Vz>,
    <Vz key="d4"><path d="M20 0L4 36l18-8 8 10z" fill="#4c95d6" stroke="none" /><path d="M20 0l2 28 8 10z" fill="#1d6eb8" stroke="none" /></Vz>,
    <Vz key="d5"><path d="M3 30a16 16 0 0 1 32 0h-6a10 10 0 0 0-20 0z" fill="#4a8fd8" stroke={INK} /><path d="M18 32l6-12" strokeWidth="3" /></Vz>,
    <Vz key="d6"><path d="M2 5h34v30H2z" fill="#fff" /><IconText x="19" y="27" textAnchor="middle" fontSize="19" fill={BLUE} stroke="none">123</IconText><path d="M6 31h26" /></Vz>,
    <Vz key="e1"><path d="M2 3h34v36H2z" fill="#fff" /><path d="M8 10h24M8 21h24M8 32h24" stroke="#2f6db5" strokeWidth="3.5" /><path d="M8 10h6M8 21h6M8 32h6" stroke={INK} strokeWidth="2" /></Vz>,
    <Vz key="e2"><path d="M2 4h34v32H2z" fill="#fff" /><path d="M7 22l7-13 6 13z" stroke="#3d8f4f" /><path d="M22 9h12l-6 13z" fill="#d84848" stroke="none" /><path d="M6 29h26" /></Vz>,
    <Vz key="e3"><path d="M2 3h32v32H2z" fill="#fff" /><path d="M2 3h32v7H2z" fill="#c8c6c4" /><path d="M7 15h6v6H7zM7 26h6v6H7z" /><path d="M18 20h19l-7 9v10h-5V29z" fill="#f3f2f1" /></Vz>,
    <Vz key="e4"><path d="M2 3h34v34H2z" fill="#fff" /><path d="M2 3h34v7H2z" fill="#c8c6c4" /><path d="M2 19h34M2 28h34M14 10v27M25 10v27" /></Vz>,
    <Vz key="e5"><path d="M2 3h34v34H2z" fill="#fff" /><path d="M2 3h34v7H2z" fill="#c8c6c4" /><path d="M14 19h22v18H14zM2 28h12v9H2z" fill={LBLUE} stroke="none" /><path d="M2 19h34M2 28h34M14 10v27M25 10v27" stroke="#2f6db5" /></Vz>,
    <Vz key="e6"><IconText x="17" y="31" textAnchor="middle" fontSize="30" fontWeight="600" fill="#2f76bf" stroke="none">R</IconText></Vz>,
    <Vz key="f1"><IconText x="19" y="28" textAnchor="middle" fontSize="27" fontWeight="600" fill="#2f76bf" stroke="none" letterSpacing="-1">Py</IconText></Vz>,
    <Vz key="f2"><Base /><path d="M2 10h24M2 22h12M2 30h10" /><circle cx="30" cy="9" r="4.5" fill={LBLUE} stroke="#2f6db5" /><circle cx="17" cy="26" r="3" /></Vz>,
    <Vz key="f3"><path d="M2 15h11v9H2z" fill={LBLUE} stroke="#2f6db5" /><path d="M13 19h8M21 7v26M21 7h3M21 19h3M21 33h3" stroke={INK} /><path d="M24 3h12v8H24zM24 15h12v8H24zM24 29h12v8H24z" fill={LBLUE} stroke="#2f6db5" /></Vz>,
    <Vz key="f4"><path d="M2 4h34v26H16l-7 8v-8H2z" fill="#fff" stroke="#2f6db5" /></Vz>,
    <Vz key="f5"><path d="M6 2h18l8 10v26H6zM24 2v10h8" fill="#fff" /><circle cx="6" cy="15" r="3" fill={LBLUE} stroke="#2f6db5" /><path d="M14 22h12M10 30h14" stroke="#2f6db5" /></Vz>,
    <Vz key="f6"><path d="M10 3h18v14c0 6-4 9-9 9s-9-3-9-9z" fill="#fff" /><path d="M10 3h18v6H10z" fill="#8a8886" /><path d="M10 6H2c0 8 3 12 9 13M28 6h8c0 8-3 12-9 13M19 26v6" /><path d="M11 33h16v5H11z" fill={LBLUE} stroke="#2f6db5" /></Vz>,
    <Vz key="g1"><path d="M6 2h18l8 10v26H6zM24 2v10h8" fill="#fff" strokeWidth="2" /><path d="M12 24h4v10h-4zM18 18h4v16h-4zM24 22h4v12h-4z" fill={INK} stroke="none" /></Vz>,
    <Vz key="g2"><path d="M4 10h32v25H4z" fill="#fff" /><IconText x="22" y="31" textAnchor="middle" fontSize="19" fill={BLUE} stroke="none">123</IconText><path d="M8 0h8l-4 9h5L5 22l3-10H3z" fill="#f7cf7a" stroke="#cf7f2e" /></Vz>,
    <Vz key="g3"><path d="M20 3h15v14H20zM4 20h14v15H4z" stroke="#8a8886" /><path d="M20 22h17l-6 8v9h-5v-9z" fill="#fff" /><path d="M8 0h8l-4 9h5L5 22l3-10H3z" fill="#f7cf7a" stroke="#cf7f2e" /></Vz>,
    <Vz key="g4"><path d="M3 4h33v35H3z" fill="#fff" stroke="#2f6db5" strokeWidth="2" /><path d="M14 8h16l-4 14 6 4-8 8H8z" fill={LBLUE} stroke="none" /><path d="M2 3a6 6 0 0 1 12 0v8l-6 10-6-10z" fill="#d27c2c" stroke="none" /><circle cx="30" cy="34" r="6" fill="#d27c2c" stroke="none" /><circle cx="35" cy="24" r="3" fill="#d27c2c" stroke="none" /></Vz>,
    <Vz key="g5"><path d="M19 3l16 17-16 17L3 20z" stroke="#8a3fa8" strokeWidth="2" /><path d="M11 11l16 18M27 11L11 29" stroke="#8a3fa8" strokeWidth="2" /></Vz>,
    <Vz key="g6"><path d="M3 5h17l16 17-12 15H3l12-16z" stroke="#2f76cf" strokeWidth="2" /><path d="M20 5L9 20M32 18L18 36" stroke="#2f76cf" strokeWidth="2" /></Vz>,
];

/* --- chart data --- */
const blockers = [
    { name: ["Marc Larumbe 23"], v: 5 },
    { name: ["Martin Famera 23"], v: 5 },
    { name: ["Unai Biel 24"], v: 5 },
    { name: ["Alejandro Bustos", "24"], v: 4 },
    { name: ["Felipe Perrone 24"], v: 4 },
];
const wastage = [
    { name: ["Felipe Perrone 23"], parts: [[13, TEAL, true], [1, SKY, false], [2, TAN, true]] },
    { name: ["Alberto Munarriz", "23"], parts: [[8, TEAL, true], [5, TAN, true]] },
    { name: ["Martin Famera 23"], parts: [[3, TEAL, true], [2, SKY, true], [16, TAN, true]] },
    { name: ["Vince Vigvari 24"], parts: [[3, TEAL, true], [1, SKY, false], [10, TAN, true]] },
    { name: ["Alejandro Bustos", "23"], parts: [[3, SKY, true], [13, TAN, true]] },
];
const trendDots = [[755, 1498], [834, 1490], [859, 1484], [874, 1483], [911, 1487], [930, 1484], [933, 1471], [943, 1477], [1014, 1458], [1033, 1473], [1064, 1475]];

const BlocksChart = () => (
    <ChartSvg width="1071" height="440" viewBox="85 650 1071 440">
        {[[4, 764], [2, 885], [0, 1006]].map(([t, y]) => (
            <g key={t}>
                <path d={`M172 ${y}H1148`} stroke="#252423" strokeWidth="2" strokeDasharray="9 7" />
                <Tick $size={20} x="154" y={y + 7} textAnchor="end">{t}</Tick>
            </g>
        ))}
        {blockers.map((b, i) => {
            const x = 242 + 174.4 * i;
            const y = 1006 - 60.5 * b.v;
            return (
                <g key={i}>
                    <rect x={x} y={y} width="134" height={1006 - y} fill={TEAL} />
                    <BarValue x={x + 67} y={y + 29} textAnchor="middle">{b.v}</BarValue>
                    {b.name.map((line, k) => (
                        <Tick key={k} x={x + 69} y={1046 + k * 27} textAnchor="middle">{line}</Tick>
                    ))}
                </g>
            );
        })}
        <AxisName x="0" y="0" textAnchor="middle" transform="translate(114 836) rotate(-90)">No. of Blocks</AxisName>
    </ChartSvg>
);

const WastageChart = () => (
    <ChartSvg width="1075" height="926" viewBox="1158 677 1075 926">
        {[[20, 770], [15, 944], [10, 1119.5], [5, 1294], [0, 1468]].map(([t, y]) => (
            <g key={t}>
                <path d={`M1248 ${y}H2225`} stroke="#252423" strokeWidth="2" strokeDasharray="9 7" />
                <Tick $size={20} x="1231" y={y + 7} textAnchor="end">{t}</Tick>
            </g>
        ))}
        {wastage.map((b, i) => {
            const x = 1318 + 174.3 * i;
            let base = 0;
            return (
                <g key={i}>
                    {b.parts.map(([v, color, showLabel], k) => {
                        base += v;
                        const y = 1468 - 34.9 * base;
                        return (
                            <g key={k}>
                                <rect x={x} y={y} width="134.5" height={34.9 * v} fill={color} />
                                {showLabel && <BarValue x={x + 67} y={y + 30} textAnchor="middle">{v}</BarValue>}
                            </g>
                        );
                    })}
                    {b.name.map((line, k) => (
                        <Tick key={k} x={x + 69} y={1508 + k * 27} textAnchor="middle">{line}</Tick>
                    ))}
                </g>
            );
        })}
        <AxisName x="0" y="0" textAnchor="middle" transform="translate(1189 1083) rotate(-90)">Wastage</AxisName>
        <circle cx="1469" cy="1571" r="8" fill={TEAL} />
        <LegendText x="1481" y="1579">Balls Lost</LegendText>
        <circle cx="1591" cy="1571" r="8" fill={SKY} />
        <LegendText x="1603" y="1579">Offensive Fouls</LegendText>
        <circle cx="1772" cy="1571" r="8" fill={TAN} />
        <LegendText x="1784" y="1579">Personal Fouls</LegendText>
    </ChartSvg>
);

const MiniScatter = () => (
    <MiniChart width="464" height="140" viewBox="664 1400 464 140">
        <defs>
            <clipPath id="miniClip">
                <rect x="755" y="1430" width="306" height="100" />
            </clipPath>
        </defs>
        {[["1,0", 1450], ["0,5", 1479], ["0,0", 1507]].map(([t, y]) => (
            <g key={t}>
                <path d={`M755 ${y}H1060`} stroke="#c8c6c4" strokeWidth="1.5" strokeDasharray="1.5 6" />
                <Tick $size={20} x="739" y={y + 7} textAnchor="end">{t}</Tick>
            </g>
        ))}
        <path d="M755 1497L1060 1466" stroke="#d9d3b5" strokeWidth="4" strokeDasharray="8 9" />
        <g clipPath="url(#miniClip)">
            {trendDots.map(([x, y], i) => (
                <circle key={i} cx={x} cy={y} r="8" fill={TEAL} />
            ))}
        </g>
        <Tick x="0" y="0" textAnchor="middle" transform="translate(701 1477) rotate(-90)">Avera...</Tick>
    </MiniChart>
);

export default function App() {
    return (
        <Page>
            <GlobalStyle />
            <TopBlack>
                <Dot />
            </TopBlack>

            <TitleBar>
                <TitleLeft>
                    <QuickIcon $mr={31} width="34" height="34" viewBox="0 0 34 34" fill="none" stroke="#fff" strokeWidth="2.4">
                        <path d="M2 2h30v30H6l-4-4zM9 2v12h16V2M9 32V20h16v12" />
                    </QuickIcon>
                    <QuickIcon $mr={25} width="30" height="34" viewBox="0 0 30 34" fill="none" stroke="#7d7c7b" strokeWidth="2.2">
                        <path d="M4 2v10h10M4 12c12-8 22 0 18 10l-6 10" />
                    </QuickIcon>
                    <QuickIcon $mr={22} width="30" height="34" viewBox="0 0 30 34" fill="none" stroke="#7d7c7b" strokeWidth="2.2">
                        <path d="M26 2v10H16M26 12C14 4 4 12 8 22l6 10" />
                    </QuickIcon>
                    <DocTitle>CNAB Power BI Portfolio Proyect&nbsp; •&nbsp; Last saved: Today at 12:44 AM</DocTitle>
                    <TitleCaret width="16" height="12" viewBox="0 0 16 12">
                        <path d="M0 0h16l-8 10z" fill="#fff" />
                    </TitleCaret>
                </TitleLeft>
                <SearchBar>
                    <svg width="36" height="34" viewBox="0 0 36 34" fill="none" stroke="#252423" strokeWidth="2">
                        <circle cx="22" cy="13" r="11" />
                        <path d="M14 21L3 33" />
                    </svg>
                    Search
                </SearchBar>
                <TitleRight>
                    Sign in
                    <Avatar width="40" height="40" viewBox="0 0 40 40">
                        <circle cx="20" cy="20" r="20" fill="#f5f5f5" />
                        <circle cx="20" cy="12" r="5" fill="none" stroke="#1b1a19" strokeWidth="2.5" />
                        <path d="M9 21h22c0 8-4 13-11 13S9 29 9 21z" fill="none" stroke="#1b1a19" strokeWidth="2.5" />
                    </Avatar>
                    <WinBtn $mr={67} width="20" height="4" viewBox="0 0 20 4">
                        <path d="M0 2h20" stroke="#fff" strokeWidth="2.5" />
                    </WinBtn>
                    <WinBtn $mr={68} width="20" height="20" viewBox="0 0 20 20">
                        <rect x="1" y="1" width="18" height="18" rx="2" fill="none" stroke="#fff" strokeWidth="2" />
                    </WinBtn>
                    <WinBtn width="22" height="22" viewBox="0 0 22 22">
                        <path d="M1 1l20 20M21 1L1 21" stroke="#fff" strokeWidth="2" />
                    </WinBtn>
                </TitleRight>
            </TitleBar>

            <Ribbon>
                <TabRow>
                    <RibbonTab $w={117}><RibbonTabLabel>File</RibbonTabLabel></RibbonTab>
                    <RibbonTab $w={139}><RibbonTabLabel $active>Home</RibbonTabLabel></RibbonTab>
                    <RibbonTab $w={132}><RibbonTabLabel>Insert</RibbonTabLabel></RibbonTab>
                    <RibbonTab $w={182}><RibbonTabLabel>Modeling</RibbonTabLabel></RibbonTab>
                    <RibbonTab $w={121}><RibbonTabLabel>View</RibbonTabLabel></RibbonTab>
                    <RibbonTab $w={175}><RibbonTabLabel>Optimize</RibbonTabLabel></RibbonTab>
                    <RibbonTab $w={60}><RibbonTabLabel>Help</RibbonTabLabel></RibbonTab>
                    <ShareBtn>
                        <svg width="32" height="34" viewBox="0 0 32 34" fill="none" stroke="#fff" strokeWidth="2">
                            <path d="M2 12v20h24v-8" />
                            <path d="M18 2l12 10-12 9v-5C10 16 6 20 6 27c0-10 4-15 12-16z" />
                        </svg>
                        Share
                        <ChevronDown size={26} strokeWidth={1.6} />
                    </ShareBtn>
                </TabRow>
                <CommandRow>
                    <Group $w={321}>
                        <GroupBody $pl={10}>
                            <Command w={92} icon="paste" lines={["Paste"]} />
                            <SmallCol>
                                <SmallRow><SmallCut />Cut</SmallRow>
                                <SmallRow><SmallCopy />Copy</SmallRow>
                                <SmallRow><SmallPainter />Format painter</SmallRow>
                            </SmallCol>
                        </GroupBody>
                        <GroupLabel>Clipboard</GroupLabel>
                    </Group>
                    <Group $w={739}>
                        <GroupBody $pl={18}>
                            <Command w={80} icon="getData" lines={["Get", "data"]} chev />
                            <Command w={110} icon="excel" lines={["Excel", "workbook"]} />
                            <Command w={134} icon="oneLake" lines={["OneLake", "data hub"]} chev />
                            <Command w={72} icon="sql" lines={["SQL", "Server"]} />
                            <Command w={88} icon="enter" lines={["Enter", "data"]} />
                            <Command w={104} icon="dataverse" lines={["Dataverse"]} />
                            <Command w={120} icon="recent" lines={["Recent", "sources"]} chev />
                        </GroupBody>
                        <GroupLabel>Data</GroupLabel>
                    </Group>
                    <Group $w={235}>
                        <GroupBody $pl={13}>
                            <Command w={120} icon="transform" lines={["Transform", "data"]} chev />
                            <Command w={82} icon="refresh" lines={["Refresh"]} />
                        </GroupBody>
                        <GroupLabel>Queries</GroupLabel>
                    </Group>
                    <Group $w={295}>
                        <GroupBody $pl={15}>
                            <Command w={80} icon="newVisual" lines={["New", "visual"]} />
                            <Command w={82} icon="textBox" lines={["Text", "box"]} />
                            <Command w={92} icon="moreVisuals" lines={["More", "visuals"]} chev />
                        </GroupBody>
                        <GroupLabel>Insert</GroupLabel>
                    </Group>
                    <Group $w={376}>
                        <GroupBody $pl={16}>
                            <Command w={140} icon="calc" lines={["New visual", "calculation"]} chev off />
                            <Command w={110} icon="measure" lines={["New", "measure"]} />
                            <Command w={86} icon="quick" lines={["Quick", "measure"]} />
                        </GroupBody>
                        <GroupLabel>Calculations</GroupLabel>
                    </Group>
                    <Group $w={148}>
                        <GroupBody $pl={13}>
                            <Command w={120} icon="sensitivity" lines={["Sensitivity", <Chev key="c" />]} off />
                        </GroupBody>
                        <GroupLabel>Sensitivity</GroupLabel>
                    </Group>
                    <Group $w={118}>
                        <GroupBody $pl={8}>
                            <Command w={100} icon="publish" lines={["Publish"]} />
                        </GroupBody>
                        <GroupLabel>Share</GroupLabel>
                    </Group>
                    <Group $w={119}>
                        <GroupBody $pl={9}>
                            <Command w={100} icon="copilot" lines={["Copilot"]} />
                        </GroupBody>
                        <GroupLabel>Copilot</GroupLabel>
                    </Group>
                    <Collapse>
                        <ChevronUp size={22} strokeWidth={3} />
                    </Collapse>
                </CommandRow>
            </Ribbon>

            <Main>
                <Rail>
                    <RailBtn $active>
                        <svg width="30" height="28" viewBox="0 0 30 28" fill="none" stroke={INK} strokeWidth="1.6">
                            <path d="M1 1v26h28" />
                            <path d="M6 24V11h4v13zM13 24V4h4v20zM20 24V8h4v16z" fill={INK} />
                        </svg>
                    </RailBtn>
                    <RailBtn>
                        <svg width="34" height="32" viewBox="0 0 34 32" fill="none" stroke="#605e5c" strokeWidth="2">
                            <path d="M1 1h32v30H1zM1 10h32M1 20h32M12 1v30M23 1v30" />
                        </svg>
                    </RailBtn>
                    <RailBtn>
                        <svg width="38" height="36" viewBox="0 0 38 36" fill="none" stroke="#8a8886" strokeWidth="2">
                            <path d="M18 1h19v14H18zM1 11h13v14H1zM18 21h19v14H18zM14 15l4-2M14 21l4 4" />
                            <path d="M18 6h19M1 16h13M18 26h19" />
                        </svg>
                    </RailBtn>
                    <RailBtn>
                        <svg width="34" height="36" viewBox="0 0 34 36" fill="none" stroke="#605e5c" strokeWidth="1.8">
                            <path d="M4 1h18l8 8v6M22 1v8h8M4 1v16M4 30v5h26v-5" />
                            <IconText x="17" y="28" textAnchor="middle" fontSize="12" fontWeight="700" fill="#605e5c" stroke="none">DAX</IconText>
                        </svg>
                    </RailBtn>
                </Rail>

                <Middle>
                    <CanvasRow>
                        <Canvas>
                            <VisualRow $h={167}>
                                <BannerCard>
                                    <BannerTitle>Selected others</BannerTitle>
                                </BannerCard>
                                <SlicerCard>
                                    <SlicerTitle>YEAR</SlicerTitle>
                                    <SlicerRow>
                                        <SlicerBtn>Deselect all</SlicerBtn>
                                        <SlicerBtn>2023</SlicerBtn>
                                        <SlicerBtn>2024</SlicerBtn>
                                    </SlicerRow>
                                    <HoverTools>
                                        <HoverTool>
                                            <svg width="32" height="32" viewBox="0 0 32 32" fill="none" stroke="currentColor" strokeWidth="2">
                                                <path d="M1 2h30L19 17v13h-6V17z" />
                                            </svg>
                                        </HoverTool>
                                        <HoverTool>
                                            <svg width="30" height="30" viewBox="0 0 30 30" fill="none" stroke="currentColor" strokeWidth="2">
                                                <path d="M12 1H1v28h28V18M1 17h12v12M16 14L29 2M20 2h9v9" />
                                            </svg>
                                        </HoverTool>
                                        <HoverTool>
                                            <svg width="30" height="6" viewBox="0 0 30 6" fill="currentColor">
                                                <circle cx="3" cy="3" r="2.2" />
                                                <circle cx="15" cy="3" r="2.2" />
                                                <circle cx="27" cy="3" r="2.2" />
                                            </svg>
                                        </HoverTool>
                                    </HoverTools>
                                </SlicerCard>
                            </VisualRow>
                            <VisualRow $h={1043}>
                                <LeftColumn>
                                    <Card $h={532}>
                                        <CardTitle $pl={7}>Unai Biel is the best blocker of the ball at CNAB</CardTitle>
                                        <CardSub $mt={9} $mb={5} $pl={7} $color="#52504e">The best blockers for CNAB in the Champions League</CardSub>
                                        <BlocksChart />
                                    </Card>
                                    <Card $h={510}>
                                        <CardTitle $pl={7} $lh={36} $size={32}>Goal efficiency increases with Powerplay efficiency</CardTitle>
                                        <KiTabs>
                                            <KiTab $active>Key influencers</KiTab>
                                            <KiTab>Top segments</KiTab>
                                            <Thumbs>
                                                <ThumbsUp size={28} strokeWidth={1.5} />
                                                <ThumbsDown size={28} strokeWidth={1.5} />
                                            </Thumbs>
                                        </KiTabs>
                                        <PromptRow>
                                            <PromptText>What influences Goal Efficiency to</PromptText>
                                            <Select>
                                                Increase
                                                <ChevronDown size={24} strokeWidth={1.4} color="#3b3a39" />
                                            </Select>
                                            ?
                                        </PromptRow>
                                        <InsightPanel>
                                            <InsightLeft>
                                                <InsightHead>
                                                    <WhenCell>When...</WhenCell>
                                                    <div>....the average of Goal<br />Efficiency increases by</div>
                                                </InsightHead>
                                                <InfluenceRow>
                                                    <InfluenceLabel>Powerplay Efficiency goes<br />up 0.41</InfluenceLabel>
                                                    <InfluenceArrow width="104" height="24" viewBox="0 0 104 24">
                                                        <path d="M0 12h92" stroke="#c8c6c4" strokeWidth="2" />
                                                        <path d="M92 4l12 8-12 8z" fill="#c8c6c4" />
                                                    </InfluenceArrow>
                                                    <InfluenceBubble>0,43</InfluenceBubble>
                                                </InfluenceRow>
                                            </InsightLeft>
                                            <DetailCard>
                                                <DetailHead>
                                                    <DetailBack>
                                                        <ArrowLeft size={26} strokeWidth={1.4} />
                                                    </DetailBack>
                                                    <div>On average when Powerplay Efficiency<br />increases, Goal Efficiency also increases.</div>
                                                </DetailHead>
                                                <MiniScatter />
                                            </DetailCard>
                                        </InsightPanel>
                                    </Card>
                                </LeftColumn>
                                <Card $grow $noLeft>
                                    <CardTitle $pl={11}>The most wasteful CNAB players in the Champions League</CardTitle>
                                    <CardSub $mt={9} $pl={11} $color="#1b1a19">
                                        Players who have allowed for the most turnovers of play for CNAB in the Champions League
                                    </CardSub>
                                    <WastageChart />
                                </Card>
                            </VisualRow>
                            <DottedBand />
                        </Canvas>
                        <FiltersPane>
                            <ChevronsLeft size={36} strokeWidth={1.6} />
                            <FilterFunnel width="26" height="28" viewBox="0 0 26 28" fill="none" stroke={INK} strokeWidth="2">
                                <path d="M25 2v24L11 16H1v-4h10z" />
                            </FilterFunnel>
                            <FiltersLabel>Filters</FiltersLabel>
                        </FiltersPane>
                    </CanvasRow>
                    <TabBar>
                        <DeviceBtn $w={86} $pt={10}>
                            <svg width="38" height="34" viewBox="0 0 38 34" fill="none" stroke={INK} strokeWidth="2.4">
                                <path d="M1 1h36v25H1z" fill="#f3f2f1" />
                                <path d="M19 26v6M12 33h14" />
                            </svg>
                            <DevicePill />
                        </DeviceBtn>
                        <DeviceBtn $w={92} $pt={9}>
                            <svg width="26" height="42" viewBox="0 0 26 42" fill="none" stroke="#605e5c" strokeWidth="2.4">
                                <rect x="1" y="1" width="24" height="40" rx="3" />
                                <circle cx="13" cy="34" r="1.5" fill="#605e5c" />
                            </svg>
                        </DeviceBtn>
                        <PageArrows>
                            <svg width="8" height="16" viewBox="0 0 8 16"><path d="M8 0v16L0 8z" fill="#c8c6c4" /></svg>
                            <svg width="8" height="16" viewBox="0 0 8 16"><path d="M0 0v16l8-8z" fill="#c8c6c4" /></svg>
                        </PageArrows>
                        <PageTab $w={250}>Player Efficiency</PageTab>
                        <PageTab $w={244}>Team Efficiency</PageTab>
                        <PageTab $w={337} $active>
                            Under-reported actions
                            <TabClose>x</TabClose>
                        </PageTab>
                        <AddPage>+</AddPage>
                    </TabBar>
                </Middle>

                <Pane $w={362}>
                    <PaneHead $pl={17} $pr={12}>
                        Visualizations
                        <ChevronsRight size={36} strokeWidth={1.6} color={INK} />
                    </PaneHead>
                    <BuildLabel>Build visual</BuildLabel>
                    <BuildTabs>
                        <BuildTab $active $mr={75}>
                            <svg width="50" height="50" viewBox="0 0 50 50">
                                <path d="M2 4h40" stroke={INK} strokeWidth="2" />
                                <rect x="1" y="12" width="48" height="16" fill={GREEN} stroke="#1b1a19" strokeDasharray="2 2" />
                                <rect x="1" y="33" width="48" height="16" fill={GREEN} stroke="#1b1a19" strokeDasharray="2 2" />
                            </svg>
                        </BuildTab>
                        <BuildTab>
                            <svg width="50" height="50" viewBox="0 0 50 50" fill="none" stroke={INK} strokeWidth="2">
                                <path d="M8 48H2V2h22l12 12v8M24 2v12h12" />
                                <path d="M46 22L26 40M14 48c8 2 14-2 14-7-4-4-10-2-10 3 0 2-2 4-4 4z" />
                            </svg>
                        </BuildTab>
                    </BuildTabs>
                    <Notch width="360" height="18" viewBox="0 0 360 18" fill="none" stroke="#8a8886" strokeWidth="2">
                        <path d="M0 16h32l16-15 16 15h296" />
                    </Notch>
                    <VizGrid>
                        {vizIcons.map((icon, idx) => (
                            <VizCell key={idx}>{icon}</VizCell>
                        ))}
                    </VizGrid>
                    <VizMore>...</VizMore>
                    <PaneSection>
                        <FieldLabel>Values</FieldLabel>
                        <DropBox $mt={13} $h={54} $pl={20}>Add data fields here</DropBox>
                        <FieldLabel $mt={23} $bold>Drill through</FieldLabel>
                        <ToggleRow $mt={19}>
                            Cross-report
                            <Toggle>
                                Off
                                <ToggleKnob />
                            </Toggle>
                        </ToggleRow>
                        <ToggleRow $mt={23}>
                            Keep all filters
                            <Toggle $on>
                                On
                                <ToggleKnob $on />
                            </Toggle>
                        </ToggleRow>
                        <DropBox $mt={21} $h={52} $pl={15}>Add drill-through fields here</DropBox>
                    </PaneSection>
                </Pane>

                <Pane $w={362}>
                    <PaneHead $pl={16} $pr={12}>
                        Data
                        <ChevronsRight size={36} strokeWidth={1.6} color={INK} />
                    </PaneHead>
                    <DataSearch>
                        <SearchGlyph size={30} strokeWidth={1.6} color="#605e5c" />
                        Search
                    </DataSearch>
                    <TreeRow>
                        <ChevronRight size={28} strokeWidth={1.4} color="#3b3a39" />
                        <TreeTable width="26" height="26" viewBox="0 0 26 26" fill="none" stroke={INK} strokeWidth="2">
                            <rect x="1" y="1" width="24" height="24" rx="3" />
                            <path d="M1 9h24M1 17h24M9 1v24M17 1v24" />
                        </TreeTable>
                        COMBINED_DATA_202...
                    </TreeRow>
                </Pane>
            </Main>

            <StatusBar>
                Page 3 of 3
                <StatusRight>
                    <svg width="244" height="26" viewBox="0 0 244 26" fill="none">
                        <path d="M0 13h5M14 13h202M234 4v18M230 13h8" stroke="#605e5c" strokeWidth="3" />
                        <path d="M96 2v22" stroke="#605e5c" strokeWidth="7" />
                        <path d="M113 8v10" stroke="#605e5c" strokeWidth="1.5" />
                    </svg>
                    <StatusPct>84%</StatusPct>
                    <StatusFit width="33" height="30" viewBox="0 0 33 30" fill="none" stroke="#605e5c" strokeWidth="2.5">
                        <path d="M2 2h29v26H2z" />
                        <path d="M9 12V8h4M20 8h4v4M24 18v4h-4M13 22H9v-4" strokeWidth="1.5" />
                    </StatusFit>
                    <UpdateText>Update available (click to download)</UpdateText>
                </StatusRight>
            </StatusBar>

            <Taskbar>
                <Weather>
                    <svg width="62" height="60" viewBox="0 0 62 60">
                        <path d="M8 36c0 14 14 22 26 16 4-2 2-8-2-8-10 0-16-6-16-14-4-2-8 2-8 6z" fill="#eda23c" />
                        <ellipse cx="16" cy="20" rx="14" ry="9" fill="#b4cdea" />
                        <ellipse cx="40" cy="42" rx="12" ry="9" fill="#a9c7ea" />
                        <circle cx="36" cy="17" r="15" fill="#b93a28" />
                        <IconText x="36" y="24" textAnchor="middle" fontSize="20" fill="#fff">1</IconText>
                    </svg>
                    <WeatherText>
                        9°C
                        <WeatherSub>Parc. nublado</WeatherSub>
                    </WeatherText>
                </Weather>
                <svg width="47" height="47" viewBox="0 0 47 47">
                    <defs>
                        <linearGradient id="winLogo" x1="0" y1="0" x2="1" y2="1">
                            <stop offset="0" stopColor="#6bc5f5" />
                            <stop offset="1" stopColor="#2670cc" />
                        </linearGradient>
                    </defs>
                    <path d="M0 2a2 2 0 0 1 2-2h20v23H0zM24 0h21a2 2 0 0 1 2 2v21H24zM0 25h22v22H2a2 2 0 0 1-2-2zM24 25h23v20a2 2 0 0 1-2 2H24z" fill="url(#winLogo)" />
                </svg>
                <TaskSearch>
                    <SearchGlyph size={36} strokeWidth={2.4} color="#1f1f1f" />
                    Búsqueda
                    <TaskSearchArt width="88" height="50" viewBox="0 0 88 50">
                        <ellipse cx="44" cy="26" rx="40" ry="24" fill="#dfe4fa" />
                        <path d="M2 48l22-20 12 6 14-16 16 14 20 16z" fill="#4e4a5f" />
                        <path d="M36 34l14-16 16 14-16-2z" fill="#c8cde0" />
                        <path d="M30 8v3M40 4v3M52 6v3M62 12v3M22 16v3M70 20v3" stroke="#c9a23a" strokeWidth="2" />
                    </TaskSearchArt>
                </TaskSearch>
                <TaskApps>
                    <TaskApp>
                        <svg width="48" height="50" viewBox="0 0 48 50">
                            <rect x="0" y="14" width="36" height="36" fill="#1f1f1f" />
                            <rect x="12" y="0" width="36" height="36" fill="#f2f2f2" opacity="0.85" />
                        </svg>
                    </TaskApp>
                    <TaskApp>
                        <CmdIcon width="44" height="52" viewBox="0 0 64 66">
                            <path d={copilotLeft} fill="url(#cpA)" />
                            <path d={copilotRight} fill="url(#cpB)" />
                        </CmdIcon>
                    </TaskApp>
                    <TaskApp>
                        <TaskAppIcon $mt={-4} width="48" height="46" viewBox="0 0 48 46">
                            <path d="M0 2a2 2 0 0 1 2-2h12l6 6h26a2 2 0 0 1 2 2v6H0z" fill="#d8a13a" />
                            <rect x="0" y="8" width="48" height="38" rx="2" fill="#f5d878" />
                            <rect x="10" y="26" width="28" height="20" rx="4" fill="#2f7ccf" />
                            <path d="M18 34h12" stroke="#1a4d8f" strokeWidth="3" />
                        </TaskAppIcon>
                        <TaskDot />
                    </TaskApp>
                    <TaskApp>
                        <TaskAppIcon $mt={-4} width="46" height="50" viewBox="0 0 46 50">
                            <defs>
                                <linearGradient id="edgeGrad" x1="0" y1="0" x2="1" y2="1">
                                    <stop offset="0" stopColor="#4fc3e0" />
                                    <stop offset="1" stopColor="#6bd46a" />
                                </linearGradient>
                            </defs>
                            <circle cx="23" cy="25" r="23" fill="url(#edgeGrad)" />
                            <path d="M2 20c4-8 16-8 20 0 4 8-2 14 2 18 5 4 14 2 18-2-6 12-22 18-32 8C2 38 0 28 2 20z" fill="#1f69c0" />
                            <ellipse cx="32" cy="24" rx="10" ry="6" fill="#dfe5f3" />
                        </TaskAppIcon>
                        <TaskDot />
                    </TaskApp>
                    <TaskApp>
                        <svg width="46" height="50" viewBox="0 0 46 50">
                            <path d="M10 10V2h26v8" fill="none" stroke="#54a5e8" strokeWidth="3" />
                            <rect x="2" y="8" width="42" height="42" rx="3" fill="#1f4d86" />
                            <rect x="12" y="18" width="10" height="12" fill="#e8542b" />
                            <rect x="24" y="18" width="10" height="12" fill="#7ab83c" />
                            <rect x="12" y="32" width="10" height="12" fill="#2f9ee8" />
                            <rect x="24" y="32" width="10" height="12" fill="#f5bb2e" />
                        </svg>
                    </TaskApp>
                    <TaskApp>
                        <svg width="48" height="48" viewBox="0 0 48 48">
                            <path d="M14 12L36 0l12 8v36c0 2-2 4-4 4H18z" fill="#2f8fd8" />
                            <path d="M36 0l12 8-24 22z" fill="#1f4d9c" />
                            <path d="M18 36l18-10 12 4v14c0 2-2 4-4 4H18z" fill="#66d3f5" />
                            <rect x="0" y="12" width="26" height="26" rx="3" fill="#1f6fc6" />
                            <circle cx="13" cy="25" r="6" fill="none" stroke="#fff" strokeWidth="3" />
                        </svg>
                    </TaskApp>
                    <TaskApp $active>
                        <TaskAppIcon $mt={-6} width="36" height="50" viewBox="0 0 36 50">
                            <rect x="0" y="24" width="16" height="26" fill="#f4db78" />
                            <rect x="10" y="12" width="16" height="38" fill="#eec94e" />
                            <rect x="20" y="0" width="16" height="50" fill="#d5a237" />
                        </TaskAppIcon>
                        <TaskDot $active />
                    </TaskApp>
                </TaskApps>
                <Tray>
                    <TrayItem $mr={38}>
                        <svg width="18" height="12" viewBox="0 0 18 12" fill="none" stroke="#1f1f1f" strokeWidth="2">
                            <path d="M1 11l8-9 8 9" />
                        </svg>
                    </TrayItem>
                    <TrayItem $mr={36}>ENG</TrayItem>
                    <TrayItem $mr={14}>
                        <svg width="32" height="34" viewBox="0 0 32 34" fill="none" stroke="#1f1f1f" strokeWidth="2">
                            <path d="M1 1h30v20H1zM16 21v6M8 30h16" />
                            <path d="M20 1h9v14h-9z" fill="#e8ecf7" />
                        </svg>
                    </TrayItem>
                    <TrayItem $mr={20}>
                        <svg width="28" height="26" viewBox="0 0 28 26" fill="none" stroke="#1f1f1f" strokeWidth="1.8">
                            <path d="M1 9h5l8-7v22l-8-7H1zM18 8c2 3 2 7 0 10M22 5c4 5 4 11 0 16" />
                        </svg>
                    </TrayItem>
                    <TrayItem $mr={30}>
                        <svg width="32" height="20" viewBox="0 0 32 20" fill="none" stroke="#1f1f1f" strokeWidth="2">
                            <rect x="1" y="1" width="26" height="18" rx="4" />
                            <rect x="4" y="4" width="10" height="12" fill="#1f1f1f" stroke="none" />
                            <path d="M30 7v6" />
                        </svg>
                    </TrayItem>
                    <Clock>
                        0:48
                        <br />
                        03/02/2025
                    </Clock>
                    <svg width="26" height="36" viewBox="0 0 26 36">
                        <path d="M13 0c6 0 8 6 8 12 0 7 2 10 5 14H0c3-4 5-7 5-14 0-6 2-12 8-12z" fill="#174a9c" />
                        <path d="M9 29h8l-4 6z" fill="#174a9c" />
                    </svg>
                </Tray>
            </Taskbar>

            <Tooltip>Players who have allowed for the most turnovers of play for CNAB in the Champions League</Tooltip>
            <Watermark>
                <WatermarkBig>Activar Windows</WatermarkBig>
                Ve a Configuración para activar Windows.
            </Watermark>
        </Page>
    );
}
